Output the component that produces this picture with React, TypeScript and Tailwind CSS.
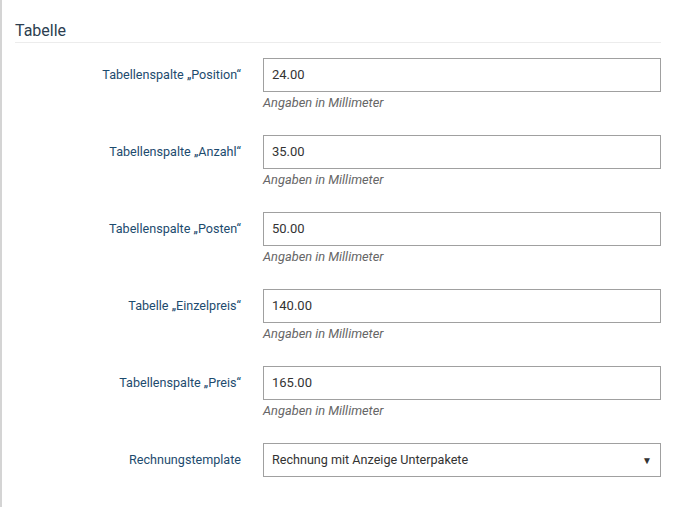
import React from 'react';

const rows = [
  { label: 'Tabellenspalte „Position“', value: '24.00' },
  { label: 'Tabellenspalte „Anzahl“', value: '35.00' },
  { label: 'Tabellenspalte „Posten“', value: '50.00' },
  { label: 'Tabelle „Einzelpreis“', value: '140.00' },
  { label: 'Tabellenspalte „Preis“', value: '165.00' },
];

export default function App() {
  return (
    <div
      className="w-[675px] h-[507px] bg-white border-l-2 border-[#d4d4d4] overflow-hidden"
      style={{ fontFamily: 'Roboto, "Liberation Sans", sans-serif' }}
    >
      <div className="pl-[13px] pr-[14px] pt-[21px]">
        {/* Section heading */}
        <div className="text-[16px] leading-[20px] text-[#2c3e50] pb-[1px] border-b border-[#ececec]">
          Tabelle
        </div>

        <div className="pt-[15px] flex flex-col gap-[23px]">
          {rows.map((row) => (
            <div key={row.label} className="grid grid-cols-[226px_398px] gap-x-[22px]">
              <div className="h-[34px] flex items-center justify-end text-[12.6px] text-[#1d4b6e]">
                {row.label}
              </div>
              <div>
                <div className="h-[34px] border border-[#a0a0a0] flex items-center px-[8px] text-[13px] text-[#333]">
                  {row.value}
                </div>
                <div className="pt-[2px] text-[12.8px] leading-[18px] italic text-[#666]">
                  Angaben in Millimeter
                </div>
              </div>
            </div>
          ))}

          <div className="grid grid-cols-[226px_398px] gap-x-[22px]">
            <div className="h-[34px] flex items-center justify-end text-[12.6px] text-[#1d4b6e]">
              Rechnungstemplate
            </div>
            <div className="h-[34px] border border-[#a0a0a0] flex items-center justify-between pl-[8px] pr-[8px] text-[12.6px] text-[#333]">
              <span>Rechnung mit Anzeige Unterpakete</span>
              <span className="text-[10px] text-[#333]">▼</span>
            </div>
          </div>
        </div>
      </div>
    </div>
  );
}
